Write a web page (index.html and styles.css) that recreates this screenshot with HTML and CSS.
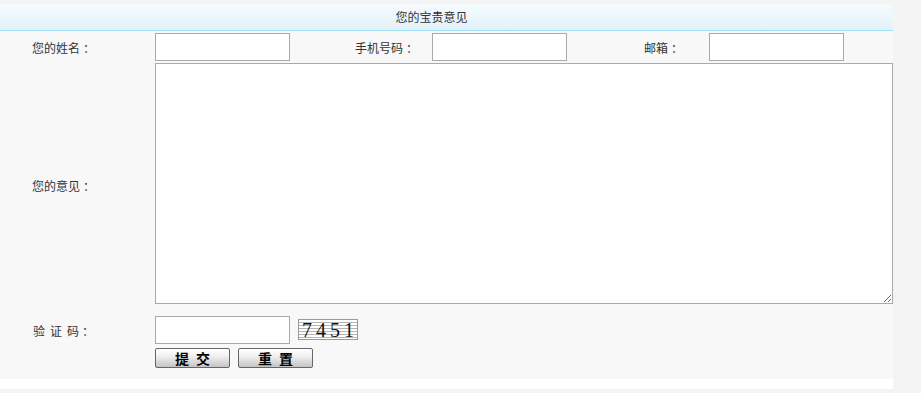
FILE: index.html
```html
<!DOCTYPE html>
<html lang="zh-CN">
<head>
  <meta charset="UTF-8" />
  <meta name="viewport" content="width=device-width, initial-scale=1" />
  <title>您的宝贵意见</title>
  <link rel="stylesheet" href="styles.css">
</head>
<body>
  <div id="feedback">
    <div class="panel-head">您的宝贵意见</div>

    <form class="feedback-form" onsubmit="return false;">
      <label class="lbl lbl-first" for="f-name">您的姓名<span class="colon">：</span></label>
      <input class="txt" id="f-name" type="text" />
      <label class="lbl lbl-mid" for="f-phone">手机号码<span class="colon">：</span></label>
      <input class="txt" id="f-phone" type="text" />
      <label class="lbl lbl-mid" for="f-mail">邮箱<span class="colon">：</span></label>
      <input class="txt" id="f-mail" type="text" />

      <label class="lbl lbl-first lbl-msg" for="f-msg">您的意见<span class="colon">：</span></label>
      <textarea class="msg" id="f-msg"></textarea>

      <label class="lbl lbl-first lbl-code" for="f-code"><span class="spaced">验证</span>码<span class="colon">：</span></label>
      <div class="code-row">
        <input class="txt" id="f-code" type="text" />
        <span class="captcha">7451</span>
      </div>

      <div class="btn-row">
        <button class="btn" type="submit">提 交</button>
        <button class="btn" type="reset">重 置</button>
      </div>
    </form>
    <div class="panel-foot"></div>
  </div>
</body>
</html>
```

FILE: styles.css
```css
html, body {
  margin: 0;
  padding: 0;
  background: #f4f4f4;
  font-family: "Noto Sans CJK SC", "Noto Sans", sans-serif;
  font-size: 12px;
  color: #333;
}

#feedback {
  width: 893px;
  padding-top: 4px;
}

.panel-head {
  height: 26px;
  line-height: 26px;
  padding-right: 30px;
  text-align: center;
  background: linear-gradient(#f6fbfd, #e2f2fa);
  border-bottom: 1px solid #9fdff4;
}

.feedback-form {
  display: grid;
  grid-template-columns: 155px 135px 142px 135px 142px 135px 49px;
  align-items: center;
  background: #f8f8f8;
  padding: 2px 0 11px;
  margin: 0;
}

.lbl {
  text-align: center;
  white-space: nowrap;
}

/* nudge the colon towards the middle of its full-width box */
.colon {
  padding-left: 3px;
  margin-right: -3px;
}

.lbl-first {
  grid-column: 1;
  padding-right: 31px;
}

.lbl-mid {
  padding-left: 48px;
}

.lbl-msg {
  padding-top: 6px;
}

.spaced {
  letter-spacing: 5px;
}

.txt {
  box-sizing: border-box;
  width: 135px;
  height: 28px;
  margin: 0;
  padding: 2px 4px;
  border: 1px solid #a9a9a9;
  background: #fff;
  font: inherit;
}

.msg {
  grid-column: 2 / 8;
  box-sizing: border-box;
  width: 738px;
  height: 241px;
  margin: 2px 0 0;
  padding: 2px;
  border: 1px solid #a9a9a9;
  background: #fff;
  font: inherit;
}

.lbl-code {
  margin-top: 12px;
}

.code-row {
  grid-column: 2 / 8;
  display: flex;
  align-items: center;
  gap: 8px;
  margin-top: 12px;
}

.captcha {
  box-sizing: border-box;
  width: 60px;
  height: 21px;
  margin-top: -2px;
  border: 1px solid #999;
  background: repeating-linear-gradient(#fff 0, #fff 2px, #b5b5b5 2px, #b5b5b5 3px);
  font-family: "Liberation Serif", serif;
  font-size: 20px;
  line-height: 20px;
  letter-spacing: 4px;
  color: #111;
  text-align: center;
  padding-left: 3px;
  overflow: hidden;
}

.btn-row {
  grid-column: 2 / 8;
  display: flex;
  gap: 8px;
  margin-top: 4px;
}

.btn {
  width: 75px;
  height: 20px;
  padding: 0;
  border: 1px solid #666;
  border-radius: 2px;
  background: linear-gradient(#ffffff, #f0f0f0 40%, #c4c4c4);
  font-family: "Noto Sans CJK SC", sans-serif;
  font-size: 14px;
  font-weight: bold;
  line-height: 18px;
  letter-spacing: 2px;
  text-indent: 2px;
  color: #000;
  cursor: pointer;
}

.panel-foot {
  height: 10px;
  background: #fff;
}
```
